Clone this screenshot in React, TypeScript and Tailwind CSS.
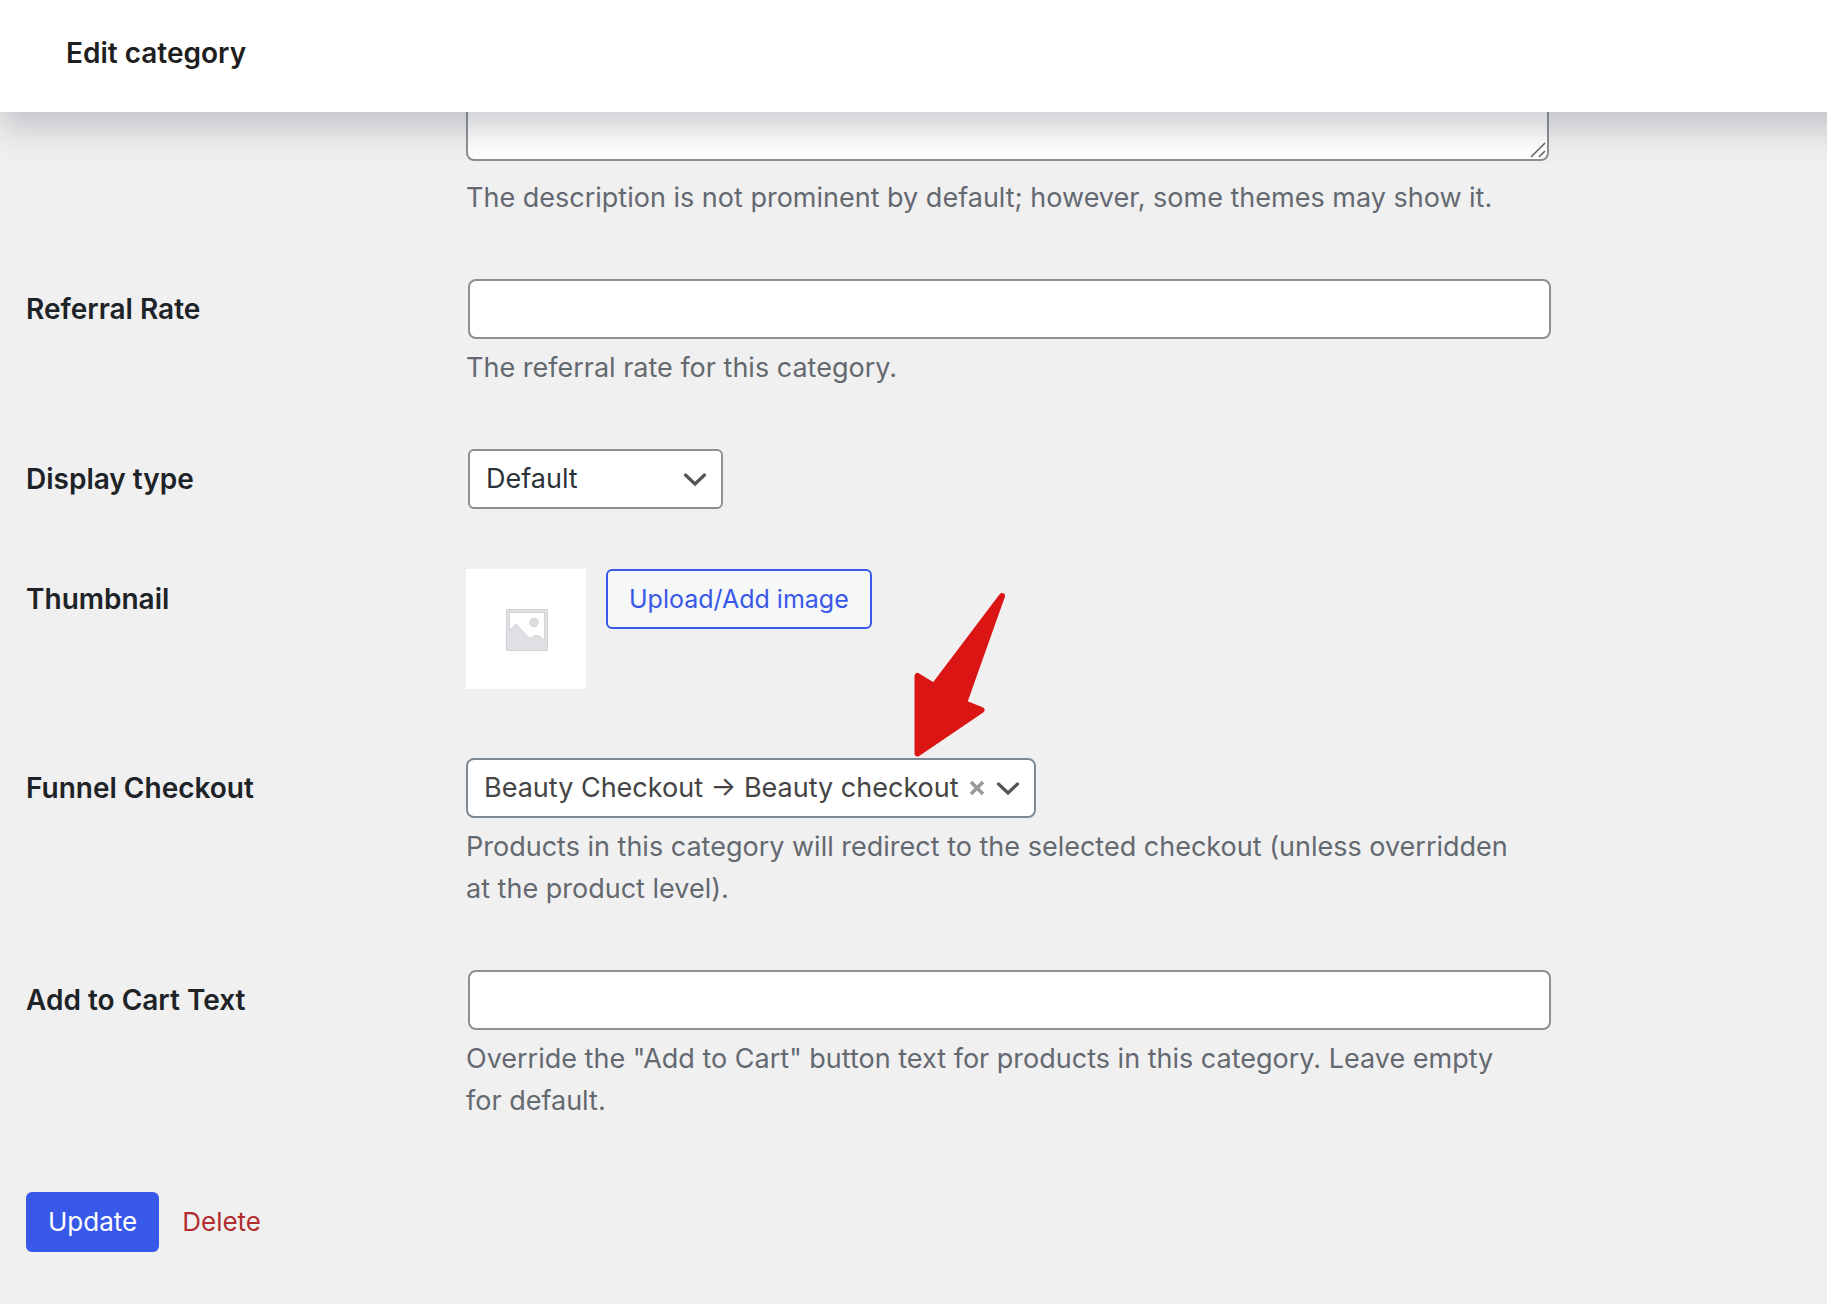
import { useState } from 'react';
import type { ReactNode } from 'react';

interface FieldRowProps {
  label: string;
  htmlFor: string;
  description?: string;
  children: ReactNode;
}

const inputClass =
  'block mx-0.5 h-15 w-full rounded-lg border-2 border-[#8c8f94] bg-white px-4 text-[#2c3338] outline-none focus:border-[#3858e9]';

function FieldRow({ label, htmlFor, description, children }: FieldRowProps) {
  return (
    <div className="flex py-[30px]">
      <label htmlFor={htmlFor} className="w-[440px] shrink-0 pt-[9px] text-[28px] font-semibold text-[#1d2327]">
        {label}
      </label>
      <div className="w-full max-w-[1083px]">
        {children}
        {description && <p className="mt-2 max-w-[1060px] text-[#646970]">{description}</p>}
      </div>
    </div>
  );
}

function Chevron() {
  return (
    <svg viewBox="0 0 32 32" className="pointer-events-none absolute top-3.5 right-3 size-8" aria-hidden="true">
      <path d="M6.5 12L16 21l9.5-9" fill="none" stroke="#555" strokeWidth="3.2" strokeLinecap="round" />
    </svg>
  );
}

function PlaceholderImage() {
  return (
    <svg viewBox="0 0 120 120" className="size-[120px] bg-white" role="img" aria-label="Placeholder">
      <path d="M40.5 40.5h41v41h-41z" fill="#dfe0e4" stroke="#cfd1d5" />
      <path
        d="M43.5 43.5h35v28c-3-3-5-5-8-5-3 0-4 2-6.5 3L49.7 55l-6.2 7z"
        fill="#fff"
        stroke="#c8cacf"
        strokeWidth="0.8"
      />
      <circle cx="68" cy="53.5" r="4.3" fill="#dcdde1" stroke="#c8cacf" strokeWidth="0.8" />
    </svg>
  );
}

// Points down at the funnel checkout field
function PointerArrow() {
  return (
    <svg
      viewBox="0 0 92 166"
      className="pointer-events-none absolute bottom-full left-[448px] h-[166px] w-[92px]"
      aria-hidden="true"
    >
      <path
        d="M88 4L20 94 3.5 84v77.5L67.500 118l-17.500-7z"
        fill="#db1414"
        stroke="#db1414"
        strokeWidth="6"
        strokeLinejoin="round"
      />
    </svg>
  );
}

export default function App() {
  const [rate, setRate] = useState('');
  const [cartText, setCartText] = useState('');
  const [checkout, setCheckout] = useState('beauty');

  return (
    <div className="min-h-screen overflow-hidden bg-[#f0f0f1] font-['Inter',sans-serif] text-[27px] leading-[42px]">
      <header className="relative z-10 -mr-12 flex h-28 items-center bg-white px-[66px] pb-1.5 shadow-[0_16px_32px_rgba(85,93,102,0.3)]">
        <h1 className="text-[28px] font-semibold text-[#1e1e1e]">Edit category</h1>
      </header>

      <form className="-mt-[51px] px-[26px]" onSubmit={(e) => e.preventDefault()}>
        <div className="pb-[30px] pl-[440px]">
          <div className="relative max-w-[1083px]">
            <textarea
              aria-label="Description"
              className="block h-[100px] w-full resize-none rounded-lg border-2 border-[#8c8f94] bg-white px-4 outline-none"
            />
            <svg viewBox="0 0 16 16" className="pointer-events-none absolute right-[3px] bottom-[3px] size-4" aria-hidden="true">
              <path d="M1 15L15 1M9 15l6-6" stroke="#666" strokeWidth="1.6" />
            </svg>
          </div>
          <p className="mt-4 text-[#646970]">
            The description is not prominent by default; however, some themes may show it.
          </p>
        </div>

        <FieldRow label="Referral Rate" htmlFor="rate" description="The referral rate for this category.">
          <input id="rate" type="text" className={inputClass} value={rate} onChange={(e) => setRate(e.target.value)} />
        </FieldRow>

        <FieldRow label="Display type" htmlFor="display">
          <div className="relative mx-0.5 w-[255px]">
            <select
              id="display"
              className="block h-15 w-full appearance-none rounded-md border-2 border-[#8c8f94] bg-white pr-12 pl-4 text-[#2c3338] outline-none"
            >
              <option>Default</option>
              <option>Products</option>
              <option>Subcategories</option>
              <option>Both</option>
            </select>
            <Chevron />
          </div>
        </FieldRow>

        <FieldRow label="Thumbnail" htmlFor="upload">
          <div className="mb-[9px] flex items-start gap-5">
            <PlaceholderImage />
            <button
              id="upload"
              type="button"
              className="h-15 rounded-md border-2 border-[#3858e9] bg-[#f6f7f7] px-[21px] text-[25px] text-[#3858e9]"
            >
              Upload/Add image
            </button>
          </div>
        </FieldRow>

        <FieldRow
          label="Funnel Checkout"
          htmlFor="checkout"
          description="Products in this category will redirect to the selected checkout (unless overridden at the product level)."
        >
          <div className="relative w-[570px]">
            <PointerArrow />
            <select
              id="checkout"
              className="block h-15 w-full appearance-none rounded-lg border-2 border-[#7e8993] bg-white pl-4 text-[#444] outline-none"
              value={checkout}
              onChange={(e) => setCheckout(e.target.value)}
            >
              <option value="">Select a checkout</option>
              <option value="beauty">Beauty Checkout → Beauty checkout</option>
            </select>
            <button
              type="button"
              aria-label="Clear"
              className="absolute top-[22px] right-[51px] size-4"
              onClick={() => setCheckout('')}
            >
              <svg viewBox="0 0 16 16" className="size-4">
                <path d="M2 2l12 12M14 2L2 14" stroke="#999" strokeWidth="3.6" />
              </svg>
            </button>
            <Chevron />
          </div>
        </FieldRow>

        <FieldRow
          label="Add to Cart Text"
          htmlFor="cart-text"
          description={'Override the "Add to Cart" button text for products in this category. Leave empty for default.'}
        >
          <input
            id="cart-text"
            type="text"
            className={inputClass}
            value={cartText}
            onChange={(e) => setCartText(e.target.value)}
          />
        </FieldRow>

        <div className="flex items-center gap-[23px] py-10 text-[26px]">
          <button type="submit" className="h-15 rounded-md bg-[#3858e9] px-[22px] text-white">
            Update
          </button>
          <a href="#delete" className="text-[#b32d2e]">
            Delete
          </a>
        </div>
      </form>
    </div>
  );
}
